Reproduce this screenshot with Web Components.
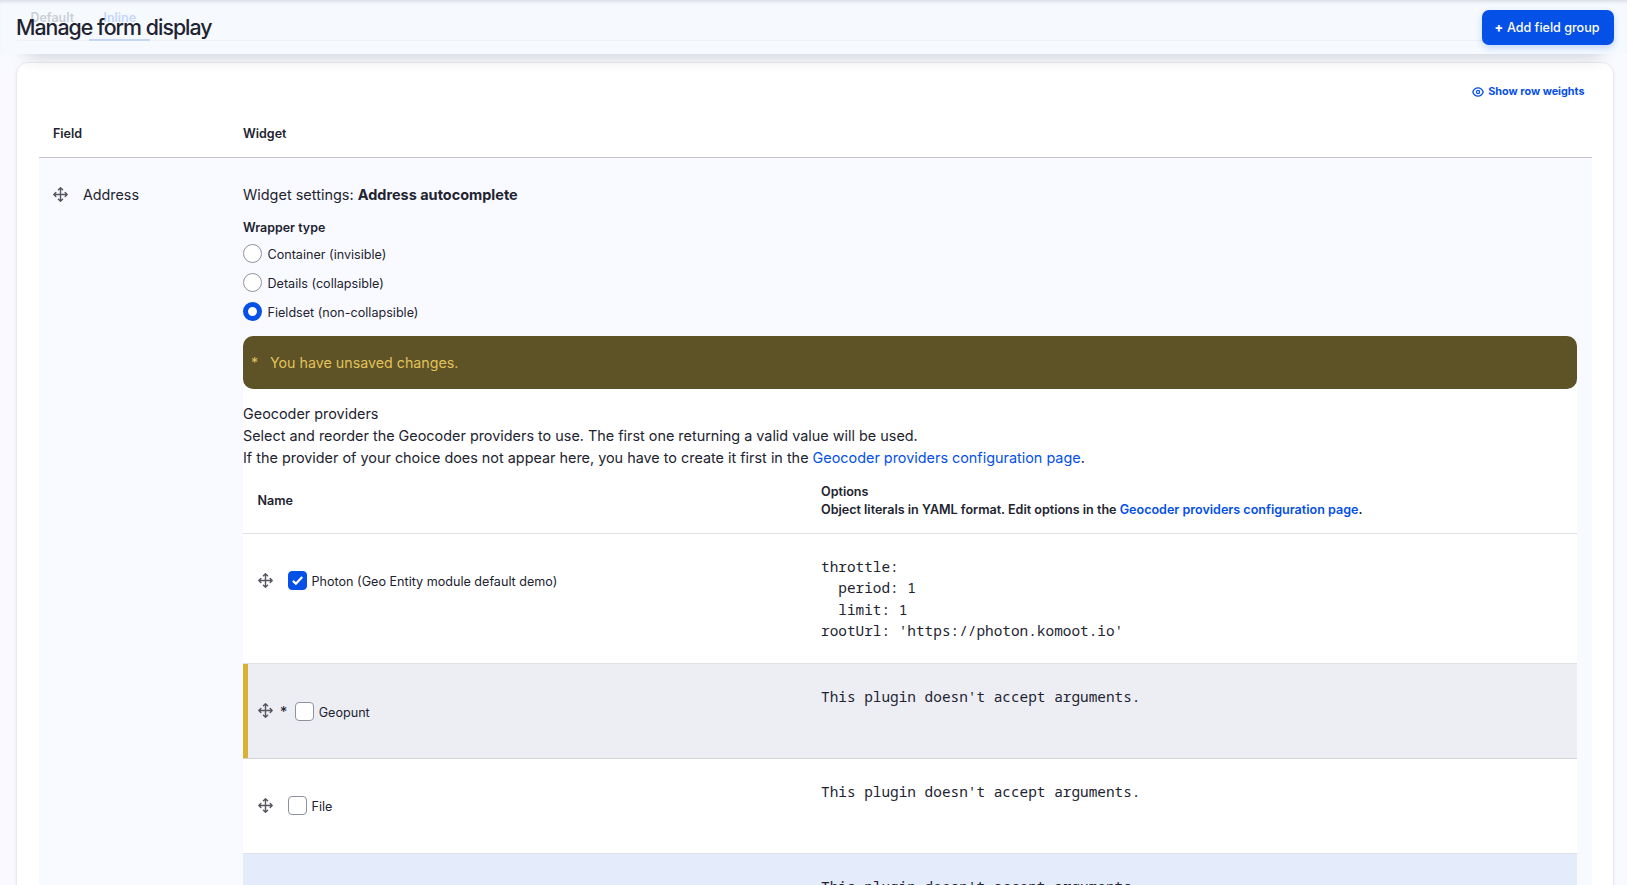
<!DOCTYPE html>
<html lang="en">
<head>
<meta charset="utf-8">
<title>Manage form display</title>
<style>
html{height:100%;overflow:hidden}
body{margin:0;height:100%;overflow:hidden;background:#f8faff;color:#222330;font:14.4px/22px Inter,sans-serif}
</style>
</head>
<body>
<form-display-page></form-display-page>
<script>
function define(name, html, setup){
  const t=document.createElement('template'); t.innerHTML=html;
  customElements.define(name, class extends HTMLElement{
    constructor(){super();this.attachShadow({mode:'open'}).append(t.content.cloneNode(true));}
    connectedCallback(){ if(setup) setup(this,this.shadowRoot); }
  });
}

define('drag-handle',`
<style>:host{display:block;width:15px;height:15px;flex:none;color:#55565f}svg{display:block}</style>
<svg width="15" height="15" viewBox="0 0 16 16" fill="none" stroke="currentColor" stroke-width="1.5" stroke-linecap="round" stroke-linejoin="round"><path d="M8 1v14M1 8h14M5.8 3 8 .9 10.2 3M5.8 13 8 15.1 10.2 13M3 5.8.9 8 3 10.2M13 5.8 15.1 8 13 10.2"/></svg>`);

define('text-link',`
<style>:host{display:inline;color:#0550e6}a{color:inherit;text-decoration:none}</style>
<a><slot></slot></a>`);

define('radio-option',`
<style>
:host{display:flex;height:29px;font-size:12.6px;line-height:20px}
i{box-sizing:border-box;width:19px;height:19px;border:1px solid #8e929c;border-radius:50%;background:#fff;flex:none}
:host([checked]) i{border:5px solid #0550e6}
span{margin:1px 0 0 5.500px}
</style>
<i></i><span><slot></slot></span>`);

define('check-option',`
<style>
:host{display:flex;font-size:12.6px;line-height:20px}
i{box-sizing:border-box;width:19px;height:19px;border:1px solid #8e929c;border-radius:4px;background:#fff;flex:none}
:host([checked]) i{border-color:#0550e6;background:#0550e6}
svg{display:none}:host([checked]) svg{display:block}
span{margin:1px 0 0 5px}
</style>
<i><svg width="17" height="17" viewBox="0 0 18 18" fill="none" stroke="#fff" stroke-width="2.4"><path d="m4.2 9.4 3.1 3L14 5.3"/></svg></i><span><slot></slot></span>`);

define('page-header',`
<style>
:host{display:block;position:relative;box-sizing:border-box;height:54px;background:#f6faff;box-shadow:inset 0 4px 4px -3px rgba(30,35,50,.18)}
.shade{position:absolute;left:0;right:0;top:54px;height:24px;overflow:hidden;pointer-events:none}
.shade::before{content:"";position:absolute;left:26px;right:26px;top:-30px;height:30px;box-shadow:0 2px 18px rgba(30,32,50,.2)}
nav{position:absolute;left:17px;right:16px;top:0;height:40px;border-bottom:1px solid #eef2f7;font-size:12.45px;font-weight:600;line-height:18px;color:#cbcfd6}
nav span{position:absolute;top:9px;left:13.5px}
nav .on{left:72px;top:9px;width:61px;height:30px;border-bottom:2px solid #c5d6f9;color:#c5d6fa;text-indent:14.5px}
.bar{position:relative;display:flex;justify-content:space-between;height:54px;padding:0 13px 0 16px}
h1{margin:12px 0 0;font-size:21.3px;line-height:30px;font-weight:500;letter-spacing:-.960px;color:#222330}
button{margin:10px 0 0;width:132px;height:34.500px;padding:1px 2px 0 0;border:0;border-radius:7px;background:#0550e6;color:#fff;font:500 12.560px/34px Inter,sans-serif;box-shadow:0 3px 7px rgba(5,80,230,.22)}
b{font-weight:800;margin-right:.500px}
</style>
<div class="shade"></div>
<nav><span>Default</span><span class="on">Inline</span></nav>
<div class="bar"><h1>Manage form display</h1><button><b>+</b> Add field group</button></div>`);

define('row-weights-toggle',`
<style>
:host{display:flex;justify-content:flex-end;align-items:center;height:16px;font-size:10.800px;line-height:16px;font-weight:700;color:#0550e6;gap:4px}
</style>
<svg width="12" height="10" viewBox="0 0 12 10" fill="none" stroke="currentColor" stroke-width="1.3"><path d="M.8 5C1.8 2.3 3.700.8 6 .8S10.200 2.300 11.200 5C10.200 7.700 8.300 9.200 6 9.200S1.800 7.700.8 5Z"/><circle cx="6" cy="5" r="1.600"/></svg><span><slot></slot></span>`);

define('status-message',`
<style>
:host{display:flex;box-sizing:border-box;height:53px;padding:16px 8px 0;border-radius:10px;background:#5e5227;color:#e0c25a;line-height:22px;font-size:14.250px}
i{font-style:normal;width:19px}
</style><i>*</i><slot></slot>`);

define('provider-row',`
<style>
:host{display:grid;grid-template-columns:578px 1fr;box-sizing:border-box;height:95px;border-bottom:1px solid #e0e1e5;background:#fff}
:host([tall]){height:130px}
:host([changed]){background:#edeef4;border-bottom-color:#d3d4da;box-shadow:inset 5px 0 #d8b135}
:host([focused]){background:#e4ebfb}
.name{display:flex;padding:37px 0 0 15px}
:host([changed]) .name{padding-top:38px}
:host([changed]) drag-handle{margin-top:1.500px}
drag-handle{margin-top:2px}
em{display:none;font-style:normal;line-height:22px;margin:-1px 0 0 7px}
:host([changed]) em{display:block}
check-option{margin-left:14.500px}
:host([changed]) check-option{margin-left:7.500px}
pre{margin:22px 0 0;font:14.4px/21.5px "Noto Sans Mono","DejaVu Sans Mono",monospace}
</style>
<div class="name"><drag-handle></drag-handle><em>*</em><check-option><slot></slot></check-option></div><pre></pre>`,
(host,root)=>{
  root.querySelector('check-option').toggleAttribute('checked',host.hasAttribute('checked'));
  root.querySelector('pre').textContent=host.getAttribute('options');
});

define('provider-table',`
<style>
:host{display:block}
header{display:grid;grid-template-columns:563.500px 1fr;align-items:center;box-sizing:border-box;height:65px;padding:1px 0 0 14.500px;border-bottom:1px solid #e0e1e5;font-size:12.560px;font-weight:600;line-height:18px}
</style>
<header><div>Name</div><div>Options<br>Object literals in YAML format. Edit options in the <text-link>Geocoder providers configuration page</text-link>.</div></header>
<slot></slot>`);

define('widget-settings',`
<style>
:host{display:block;padding:25px 0 0}
.title{line-height:24px;font-size:14.470px}
.label{margin-top:12px;font-size:12.450px;font-weight:600;line-height:18px;margin-bottom:7px}
.providers{margin-top:5px;background:linear-gradient(transparent 30px,#fff 30px)}
.intro{padding:14px 0 0;height:66px}
</style>
<div class="title">Widget settings: <b>Address autocomplete</b></div>
<div class="label">Wrapper type</div>
<radio-option>Container (invisible)</radio-option>
<radio-option>Details (collapsible)</radio-option>
<radio-option checked>Fieldset (non-collapsible)</radio-option>
<div class="providers">
<status-message>You have unsaved changes.</status-message>
<div class="intro">Geocoder providers<br>Select and reorder the Geocoder providers to use. The first one returning a valid value will be used.<br>If the provider of your choice does not appear here, you have to create it first in the <text-link>Geocoder providers configuration page</text-link>.</div>
<provider-table>
<provider-row tall checked options="throttle:
  period: 1
  limit: 1
rootUrl: 'https://photon.komoot.io'">Photon (Geo Entity module default demo)</provider-row>
<provider-row changed options="This plugin doesn't accept arguments.">Geopunt</provider-row>
<provider-row options="This plugin doesn't accept arguments.">File</provider-row>
<provider-row focused options="This plugin doesn't accept arguments."></provider-row>
</provider-table>
</div>`);

define('field-table',`
<style>
:host{display:block}
header,.row{display:grid;grid-template-columns:190px 1fr;padding:0 15px 0 14px}
header{box-sizing:border-box;height:49px;border-bottom:1px solid #c4c5cc;font-size:12.500px;font-weight:600;line-height:18px;padding-top:16px}
.row{background:#f9faff}
.field{display:flex;padding-top:25px;line-height:24px;font-size:14.300px}
.field drag-handle{margin:4px 15px 0 0}
widget-settings{min-width:0}
</style>
<header><div>Field</div><div>Widget</div></header>
<div class="row"><div class="field"><drag-handle></drag-handle>Address</div><widget-settings></widget-settings></div>`);

define('content-card',`
<style>
:host{display:block;box-sizing:border-box;margin:8px 13px 0 16px;height:1000px;padding:20.500px 21px 0 22px;border:1px solid #e9ebec;border-radius:12px;background:#fff;box-shadow:0 2px 4px rgba(30,40,80,.06)}
</style><slot></slot>`);

define('form-display-page',`
<style>
:host{display:block;height:885px;overflow:hidden}
row-weights-toggle{margin:0 7.500px 9px 0}
</style>
<page-header></page-header>
<content-card>
<row-weights-toggle>Show row weights</row-weights-toggle>
<field-table></field-table>
</content-card>`);
</script>
</body>
</html>
